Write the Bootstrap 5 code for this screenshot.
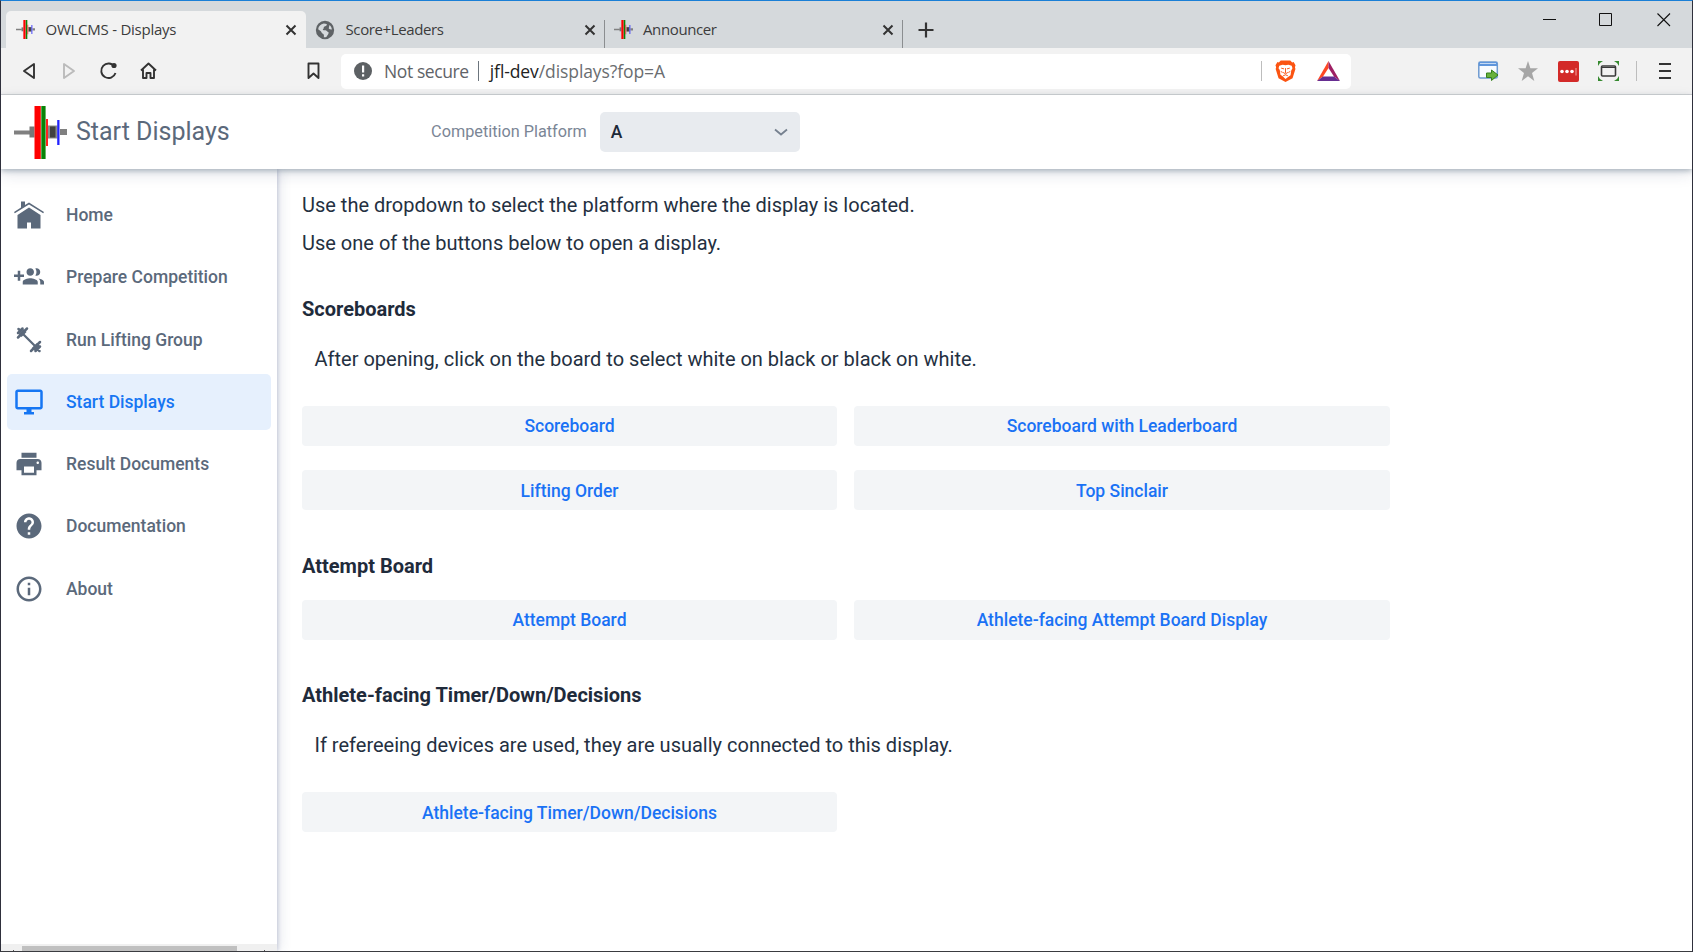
<!DOCTYPE html>
<html lang="en">
<head>
<meta charset="utf-8">
<title>OWLCMS - Displays</title>
<link href="https://cdn.jsdelivr.net/npm/bootstrap@5.3.0/dist/css/bootstrap.min.css" rel="stylesheet">
<style>
body{font-family:Roboto,sans-serif;color:#243041;font-size:20px;line-height:32px;background:#fff}
svg{display:block;flex:none}
.win{width:1693px;height:952px;border:1px solid #2f303c;border-top-color:#1a7fd6;border-bottom-color:#3a3b40}
.ui{font-family:"Open Sans",sans-serif;color:#333}
.strip{height:47px;background:#d5d9dc;padding:10px 0 0 5px}
.tab{width:298.5px;height:37px;padding:0 9px 0 9px;font-size:15px;line-height:20px;color:#3c3c3c}
.tab span{margin-left:10.5px;padding-bottom:2px;letter-spacing:-.38px}
.tab.on{width:300px;background:#f2f2f2;border-radius:5px 5px 0 0;padding-left:10px;padding-right:9px}
.tab.on span{letter-spacing:-.25px}
.tab.cut{position:relative}
.tab.cut::after{content:"";position:absolute;right:0;top:9px;bottom:0;width:1px;background:#8b8e90}
.tools{height:47px;background:#f2f2f2;border-bottom:1px solid #d3d4d6}
.addr{width:1010px;height:35px;border-radius:5px;background:#fff;margin-left:18px;padding:0 11px 0 13px;font-size:17.5px;line-height:24px}
.vr1{width:1px;height:20px;background:#bdbdbd}
.top{height:74px;background:#fff;box-shadow:0 2px 5px rgba(70,95,110,.38),0 5px 14px rgba(30,50,90,.13);position:relative;z-index:3}
.ttl{font-size:25px;color:#5b697b;margin-left:9px}
.lbl{font-size:16.25px;color:#7b8696}
.pick{width:200px;height:40px;border-radius:5px;background:#e8ebef;color:#1c2938;font-weight:500;font-size:17.5px;padding:0 12px 0 11px}
.side{width:276px;background:#fff;box-shadow:1px 0 4px rgba(40,60,120,.22),3px 0 12px rgba(40,60,110,.12);position:relative;z-index:2;padding-top:18px}
.side a{height:56px;margin:0 6px 6.3px;padding-left:7px;border-radius:5px;color:#5b697b;font-weight:500;font-size:17.5px;text-decoration:none;gap:22px}
.side a.on{background:#e6f0fd;color:#1676f3}
.sb{height:7px;background:#f0f0f0;padding:2px 12px 0 12px}
.sb div{height:5px;width:215px;background:#c0c0c0}
.sb i{width:1px;height:1px;background:#555}
.body1{padding:20px 0 0 25px;width:1113px}
.body1 h3{font-size:20px;font-weight:700;line-height:26px;margin:0;color:#1f2b3b}
.pair{display:grid;grid-template-columns:535px 536px;column-gap:17px;row-gap:24px}
.pair .btn{height:40px;background:#f3f5f7;color:#1a72f5;font-weight:500;font-size:17.5px;border:0;border-radius:4px;line-height:28px;padding:6px}
.pair .btn.low{padding:7px 6px 5px}
</style>
</head>
<body>
<svg width="0" height="0" class="position-absolute">
<defs>
<symbol id="bar" viewBox="0 0 53 53">
<path fill="#808080" d="M0 24.5h16v4H0zM46 23h7v6h-7z"/><path fill="#777" d="M15.500 20.500h5v11h-5z"/><path fill="#8a8a8a" d="M34 19.500h9.500v13H34z"/><path fill="#404040" d="M36 20.500h5.500v11h-5.500z"/>
<path fill="red" d="M20.500 0h6.300v53h-6.300z"/><path fill="#078407" d="M27.300 0h4.300v53h-4.300z"/><path fill="#f22" d="M32 13h2v27h-2z"/><path fill="#22f" d="M43.200 14h2.300v25h-2.300z"/>
</symbol>
<symbol id="x" viewBox="0 0 12 12"><path d="M1.500 1.500l9 9m0-9l-9 9" stroke="#333" stroke-width="2" fill="none"/></symbol>
</defs>
</svg>
<div class="win d-flex flex-column overflow-hidden">
  <div class="strip ui d-flex">
    <div class="tab on d-flex align-items-center"><svg width="19" height="19"><use href="#bar"/></svg><span>OWLCMS - Displays</span><svg class="ms-auto" width="12" height="12"><use href="#x"/></svg></div>
    <div class="tab cut d-flex align-items-center"><svg width="20" height="20" viewBox="0 0 24 24" fill="#5f6366"><path d="M12 1a11 11 0 100 22 11 11 0 000-22zm-1.500 3.200c1.500.2 3 .5 4 1.200-.5 1.600-2 2-3.500 2.600-1 .5 0 2.500-1.500 3-.5 1 .5 1.200 2 1.200 2 0 3 .8 3.500 2 1.500.3 1.800 1.500.8 2.800-1 1-1 2-2.300 3.500-1 .3-2 .4-3 .2.500-1.500.3-3-.5-4-1.800-.5-2-2-3-3.300L3.800 11c.4-3.600 3-6.200 6.700-6.800zM17.500 6c1.600 1.500 2.600 3.300 2.700 5.500-1.200-.3-3 .2-3.700-1.200.2-1.300.4-2.900 1-4.300z" fill-rule="evenodd"/></svg><span>Score+Leaders</span><svg class="ms-auto" width="12" height="12"><use href="#x"/></svg></div>
    <div class="tab cut d-flex align-items-center"><svg width="19" height="19"><use href="#bar"/></svg><span>Announcer</span><svg class="ms-auto" width="12" height="12"><use href="#x"/></svg></div>
    <svg class="align-self-center" style="margin-left:15px" width="16" height="16"><path d="M8 .5v15M.5 8h15" stroke="#333" stroke-width="2.200"/></svg>
    <svg class="ms-auto" style="margin-right:21px;margin-top:2px" width="128" height="14" fill="none" stroke="#111"><path d="M0 6.500h13M56.500.5h12v12h-12z"/><path d="M114.500.5l12.500 12.500m0-12.500L114.500 13" stroke-width="1.100"/></svg>
  </div>
  <div class="tools ui d-flex align-items-center">
    <svg width="140" height="20" style="margin-left:20px" fill="none" stroke="#333" stroke-width="1.900" stroke-linejoin="round"><path d="M13 3v14L3 10z"/><path stroke="#bbb" d="M43 3v14l10-7z"/><path d="M93.500 5.500A7.300 7.300 0 1 0 94.500 12"/><circle cx="93" cy="4.500" r="2.600" fill="#333" stroke="none"/><path d="M120 9.500l7.500-7 7.500 7M122 8.500V17h3.500v-5h4v5h3.500V8.500"/></svg>
    <svg style="margin-left:144px" width="18" height="20" fill="none" stroke="#333" stroke-width="1.900" stroke-linejoin="round"><path d="M3.500 2.500h10v14.500l-5-4.500-5 4.500z"/></svg>
    <div class="addr d-flex align-items-center">
      <svg width="18" height="18"><circle cx="9" cy="9" r="9" fill="#5d6164"/><path fill="#fff" d="M8 3.500h2.200v7H8zM8 12.300h2.200v2.200H8z"/></svg>
      <span style="margin-left:12px;color:#5f6368;letter-spacing:-.4px">Not secure</span>
      <span class="vr1 bg-secondary" style="margin-left:9.500px;margin-right:10.500px"></span>
      <span style="color:#6a6d70;letter-spacing:-.09px"><span style="color:#222">jfl-dev</span>/displays?fop=A</span>
      <span class="vr1 ms-auto"></span>
      <svg style="margin-left:13px" width="21" height="24" viewBox="0 0 22 24"><path fill="#fb5412" d="M6 1h10l2 2 1.500-.3L21.500 6l-.6 2 .5 2-3 9.500L11 23.500l-7.300-4L.7 10l.5-2L.5 6l2.100-3.300L4 3z"/><path fill="#fff" d="M4.500 6.500l3.500-1 3 .5 3-.5 3.500 1 .8 2.500-1.300 2.500-.7 5-2.300 1.500L11 20.500 8 17.500 5.700 16l-.7-5L3.700 9z"/><path fill="none" stroke="#fb5412" stroke-width="1" d="M6.500 9l3 .8m6-.8l-3 .8M11 9v5m-2.500-.5l2.500 1.500 2.500-1.500M6 12.500l2 1m8-1l-2 1M8.500 17l2.500-1 2.500 1"/></svg>
      <svg style="margin-left:21px" width="23" height="20"><path fill="#ff4724" d="M11.500 0v7L6 15.500 0 20z"/><path fill="#9e1f63" d="M11.500 0L23 20l-6-4.500L11.500 7z"/><path fill="#662d91" d="M0 20l6-4.500h11L23 20z"/></svg>
    </div>
    <svg style="margin-left:127px" width="22" height="22"><rect x=".8" y="2" width="18.500" height="16" rx="1.500" fill="#f8fbff" stroke="#6d9ad0" stroke-width="1.500"/><path fill="#5f96dc" d="M1 2h18v4H1z"/><path fill="#c5daf4" d="M2 3h16v1H2z"/><path fill="#67b13c" stroke="#34801c" d="M8.500 13h5v-3l6.500 5-6.500 5.500v-3h-5z"/></svg>
    <svg style="margin-left:18px" width="20" height="20"><path fill="#a6a6a6" d="M10 0l2.400 7.300H20l-6 4.700 2.300 8L10 15.200 3.700 20 6 12 0 7.300h7.600z"/></svg>
    <svg style="margin-left:20px" width="21" height="21"><rect width="21" height="21" rx="2" fill="#d32a28"/><g fill="#fff"><circle cx="4" cy="10.500" r="1.800"/><circle cx="9" cy="10.500" r="1.800"/><circle cx="14" cy="10.500" r="1.800"/></g><path fill="#f5a5a0" d="M17.500 7h1v7.500h-1z"/></svg>
    <svg style="margin-left:19px" width="21" height="20" fill="none"><rect x="3.500" y="5" width="14" height="10" rx="1" stroke="#3a3a3a" stroke-width="1.600"/><path stroke="#3a3a3a" d="M4 6.500h13"/><path fill="#35892e" d="M0 0h5L2 2 0 5zM21 0h-5l3 2 2 3zM0 20h5l-3-2-2-3zM21 20h-5l3-2 2-3z"/></svg>
    <span class="vr1" style="margin-left:17px"></span>
    <svg style="margin-left:22px" width="12" height="16"><path d="M0 1h12M0 8h12M0 15h12" stroke="#333" stroke-width="1.800"/></svg>
  </div>
  <div class="top d-flex align-items-center">
    <svg style="margin-left:13px" width="53" height="53"><use href="#bar"/></svg>
    <span class="ttl">Start Displays</span>
    <div class="d-flex align-items-center justify-content-end" style="width:570px">
      <span class="lbl">Competition Platform</span>
      <div class="pick d-flex align-items-center justify-content-between" style="margin-left:13px"><span>A</span><svg width="14" height="9"><path d="M1 1.500l6 5 6-5" fill="none" stroke="#76818f" stroke-width="1.800"/></svg></div>
    </div>
  </div>
  <div class="d-flex flex-grow-1">
    <nav class="side d-flex flex-column">
      <a href="#" class="d-flex align-items-center"><svg width="30" height="30" fill="currentColor"><path d="M0 12l7-4.500V1.500h4V5l4-2.500L30 12l-.8 1.300L15 4.500.8 13.300z"/><path d="M15 7.500L26.500 15v13.500h-9.500v-6h-4v6H3.500V15z"/></svg>Home</a>
      <a href="#" class="d-flex align-items-center"><svg width="30" height="30" viewBox="0 0 24 24" fill="currentColor"><path d="M8 10H5V7H3v3H0v2h3v3h2v-3h3v-2zm10 1c1.660 0 2.990-1.340 2.990-3S19.660 5 18 5c-.32 0-.63.05-.91.14.57.81.9 1.790.9 2.860s-.34 2.040-.9 2.860c.28.09.59.14.91.14zm-5 0c1.660 0 2.990-1.340 2.990-3S14.660 5 13 5c-1.660 0-3 1.340-3 3s1.340 3 3 3zm6.620 2.160c.83.73 1.380 1.660 1.380 2.840v2h3v-2c0-1.540-2.370-2.490-4.380-2.840zM13 13c-2 0-6 1-6 3v2h12v-2c0-2-4-3-6-3z"/></svg>Prepare Competition</a>
      <a href="#" class="d-flex align-items-center"><svg width="30" height="30" fill="none" stroke="currentColor"><path stroke-width="2.300" d="M9 9l12 12"/><path stroke-width="2.500" stroke-linecap="round" d="M4 12.500l9-9M4 8l4.500-4.500M4.500 4l2 2M17 26l9-9M21.500 26l4.500-4.500M23.500 24l2 2"/><path stroke-width="4.500" d="M6 10.500l5-5M19.500 24.500l5-5"/></svg>Run Lifting Group</a>
      <a href="#" class="on d-flex align-items-center"><svg width="30" height="30" viewBox="0 0 24 24" fill="currentColor"><path d="M21 2H3c-1.100 0-2 .9-2 2v12c0 1.100.9 2 2 2h7v2H8v2h8v-2h-2v-2h7c1.100 0 2-.9 2-2V4c0-1.100-.9-2-2-2zm0 14H3V4h18v12z"/></svg>Start Displays</a>
      <a href="#" class="d-flex align-items-center"><svg width="30" height="30" viewBox="0 0 24 24" fill="currentColor"><path d="M19 8H5c-1.660 0-3 1.340-3 3v6h4v4h12v-4h4v-6c0-1.660-1.340-3-3-3zm-3 11H8v-5h8v5zm3-7c-.55 0-1-.45-1-1s.45-1 1-1 1 .45 1 1-.45 1-1 1zm-1-9H6v4h12V3z"/></svg>Result Documents</a>
      <a href="#" class="d-flex align-items-center"><svg width="30" height="30" viewBox="0 0 24 24" fill="currentColor"><path d="M12 2C6.480 2 2 6.480 2 12s4.480 10 10 10 10-4.480 10-10S17.520 2 12 2zm1 17h-2v-2h2v2zm2.070-7.750l-.9.920C13.450 12.900 13 13.500 13 15h-2v-.5c0-1.100.45-2.100 1.170-2.830l1.240-1.260c.37-.36.59-.86.59-1.410 0-1.100-.9-2-2-2s-2 .9-2 2H8c0-2.210 1.790-4 4-4s4 1.790 4 4c0 .88-.36 1.680-.93 2.250z"/></svg>Documentation</a>
      <a href="#" class="d-flex align-items-center"><svg width="30" height="30" viewBox="0 0 24 24" fill="currentColor"><path d="M11 17h2v-6h-2v6zm1-15C6.480 2 2 6.480 2 12s4.480 10 10 10 10-4.480 10-10S17.520 2 12 2zm0 18c-4.410 0-8-3.590-8-8s3.590-8 8-8 8 3.590 8 8-3.590 8-8 8zM11 9h2V7h-2v2z"/></svg>About</a>
      <div class="sb mt-auto d-flex align-items-end"><i></i><div class="ms-2"></div><i class="ms-auto"></i></div>
    </nav>
    <main class="body1">
      <p class="mb-0">Use the dropdown to select the platform where the display is located.</p>
      <p class="mb-0" style="margin-top:6px">Use one of the buttons below to open a display.</p>
      <h3 style="margin-top:37px">Scoreboards</h3>
      <p class="mb-0" style="margin:21px 0 0 12.500px">After opening, click on the board to select white on black or black on white.</p>
      <div class="pair" style="margin-top:31px">
        <button class="btn">Scoreboard</button><button class="btn">Scoreboard with Leaderboard</button>
        <button class="btn low">Lifting Order</button><button class="btn low">Top Sinclair</button>
      </div>
      <h3 style="margin-top:43px">Attempt Board</h3>
      <div class="pair" style="margin-top:21px"><button class="btn">Attempt Board</button><button class="btn">Athlete-facing Attempt Board Display</button></div>
      <h3 style="margin-top:42px">Athlete-facing Timer/Down/Decisions</h3>
      <p class="mb-0" style="margin:21px 0 0 12.500px">If refereeing devices are used, they are usually connected to this display.</p>
      <div class="pair" style="margin-top:31px"><button class="btn low">Athlete-facing Timer/Down/Decisions</button></div>
    </main>
  </div>
</div>
<script src="https://cdn.jsdelivr.net/npm/bootstrap@5.3.0/dist/js/bootstrap.bundle.min.js"></script>
</body>
</html>
